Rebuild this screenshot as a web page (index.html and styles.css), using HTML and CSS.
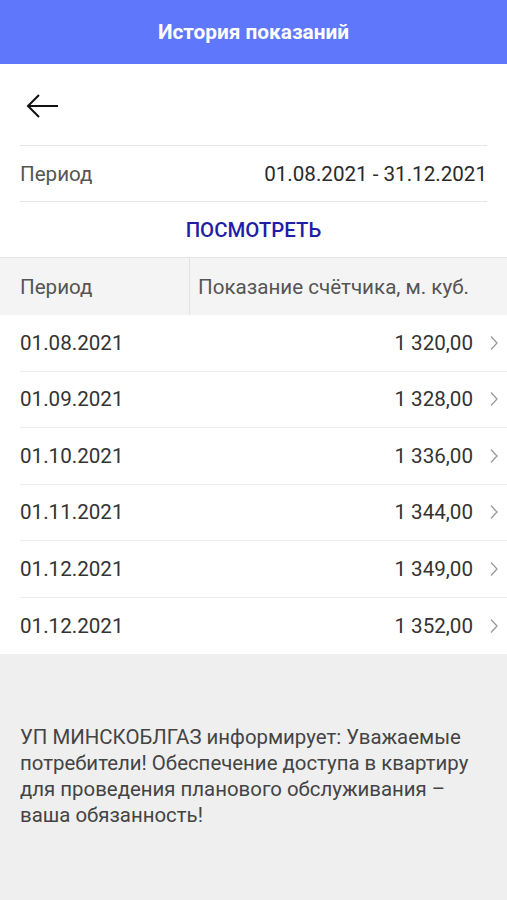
FILE: index.html
```html
<!DOCTYPE html>
<html lang="ru">
<head>
    <meta charset="UTF-8">
    <meta name="viewport" content="width=device-width, initial-scale=1.0">
    <title>История показаний</title>
    <link rel="stylesheet" href="styles.css">
</head>
<body>
    <header class="topbar">История показаний</header>

    <div class="toolbar">
        <button class="back-button" aria-label="Назад">
            <svg width="34" height="26" viewBox="0 0 34 26">
                <path d="M32 13H3M13 2L2 13l11 11" fill="none" stroke="#111" stroke-width="2"/>
            </svg>
        </button>
    </div>

    <div class="filter">
        <div class="filter-row">
            <span class="filter-label">Период</span>
            <span class="filter-value">01.08.2021 - 31.12.2021</span>
        </div>
        <button class="show-button">ПОСМОТРЕТЬ</button>
    </div>

    <div class="table">
        <div class="table-head">
            <div class="head-cell head-period">Период</div>
            <div class="head-cell head-value">Показание счётчика, м. куб.</div>
        </div>

        <div class="table-row">
            <span class="row-date">01.08.2021</span>
            <span class="row-value">1 320,00</span>
            <svg class="chevron" width="8" height="16" viewBox="0 0 8 16"><path d="M1 1.5L7 8l-6 6.5" fill="none" stroke="#9a9a9a" stroke-width="1.3"/></svg>
        </div>
        <div class="table-row">
            <span class="row-date">01.09.2021</span>
            <span class="row-value">1 328,00</span>
            <svg class="chevron" width="8" height="16" viewBox="0 0 8 16"><path d="M1 1.5L7 8l-6 6.5" fill="none" stroke="#9a9a9a" stroke-width="1.3"/></svg>
        </div>
        <div class="table-row">
            <span class="row-date">01.10.2021</span>
            <span class="row-value">1 336,00</span>
            <svg class="chevron" width="8" height="16" viewBox="0 0 8 16"><path d="M1 1.5L7 8l-6 6.5" fill="none" stroke="#9a9a9a" stroke-width="1.3"/></svg>
        </div>
        <div class="table-row">
            <span class="row-date">01.11.2021</span>
            <span class="row-value">1 344,00</span>
            <svg class="chevron" width="8" height="16" viewBox="0 0 8 16"><path d="M1 1.5L7 8l-6 6.5" fill="none" stroke="#9a9a9a" stroke-width="1.3"/></svg>
        </div>
        <div class="table-row">
            <span class="row-date">01.12.2021</span>
            <span class="row-value">1 349,00</span>
            <svg class="chevron" width="8" height="16" viewBox="0 0 8 16"><path d="M1 1.5L7 8l-6 6.5" fill="none" stroke="#9a9a9a" stroke-width="1.3"/></svg>
        </div>
        <div class="table-row">
            <span class="row-date">01.12.2021</span>
            <span class="row-value">1 352,00</span>
            <svg class="chevron" width="8" height="16" viewBox="0 0 8 16"><path d="M1 1.5L7 8l-6 6.5" fill="none" stroke="#9a9a9a" stroke-width="1.3"/></svg>
        </div>
    </div>

    <footer class="notice">
        УП МИНСКОБЛГАЗ информирует: Уважаемые потребители! Обеспечение доступа в квартиру для проведения планового обслуживания – ваша обязанность!
    </footer>
</body>
</html>
```

FILE: styles.css
```css
body {
    margin: 0;
    padding: 0;
    font-family: Roboto, 'Noto Sans', sans-serif;
    background: #efefef;
    color: #333;
    height: 100vh;
    display: flex;
    flex-direction: column;
}

.topbar {
    flex-shrink: 0;
    height: 64px;
    background: #5f78fb;
    color: white;
    font-size: 20.8px;
    font-weight: bold;
    display: flex;
    align-items: center;
    justify-content: center;
}

.toolbar {
    background: white;
    height: 81px;
    padding: 0 20px;
    display: flex;
    align-items: center;
}

.back-button {
    background: none;
    border: none;
    padding: 0;
    margin: 2px 0 0 6px;
    display: flex;
    cursor: pointer;
}

.filter {
    background: white;
    padding: 0 20px;
}

.filter-row {
    height: 55px;
    border-top: 1px solid #e6e6e6;
    border-bottom: 1px solid #e6e6e6;
    display: flex;
    align-items: center;
    justify-content: space-between;
    font-size: 20.6px;
}

.filter-label {
    color: #555;
}

.filter-value {
    color: #2a2a2a;
}

.show-button {
    display: block;
    width: 100%;
    height: 55px;
    background: none;
    border: none;
    font-family: inherit;
    font-size: 20.4px;
    font-weight: 500;
    color: #1f1ea6;
    cursor: pointer;
}

.table {
    background: white;
}

.table-head {
    display: flex;
    height: 57px;
    background: #f4f4f4;
    border-top: 1px solid #e2e2e2;
    font-size: 20.6px;
    color: #555;
}

.head-cell {
    display: flex;
    align-items: center;
}

.head-period {
    width: 169px;
    padding-left: 20px;
    border-right: 1px solid #e4e4e4;
}

.head-value {
    padding-left: 8px;
}

.table-row {
    height: 55.5px;
    margin-left: 20px;
    padding-right: 9px;
    border-bottom: 1px solid #ececec;
    display: flex;
    align-items: center;
    font-size: 20.6px;
    color: #333;
}

.table-row:last-child {
    border-bottom: none;
    height: 56.5px;
}

.row-value {
    margin-left: auto;
}

.chevron {
    margin-left: 17px;
}

.notice {
    padding: 70px 27px 0 20px;
    font-size: 20.4px;
    line-height: 26px;
    color: #444;
}
```
